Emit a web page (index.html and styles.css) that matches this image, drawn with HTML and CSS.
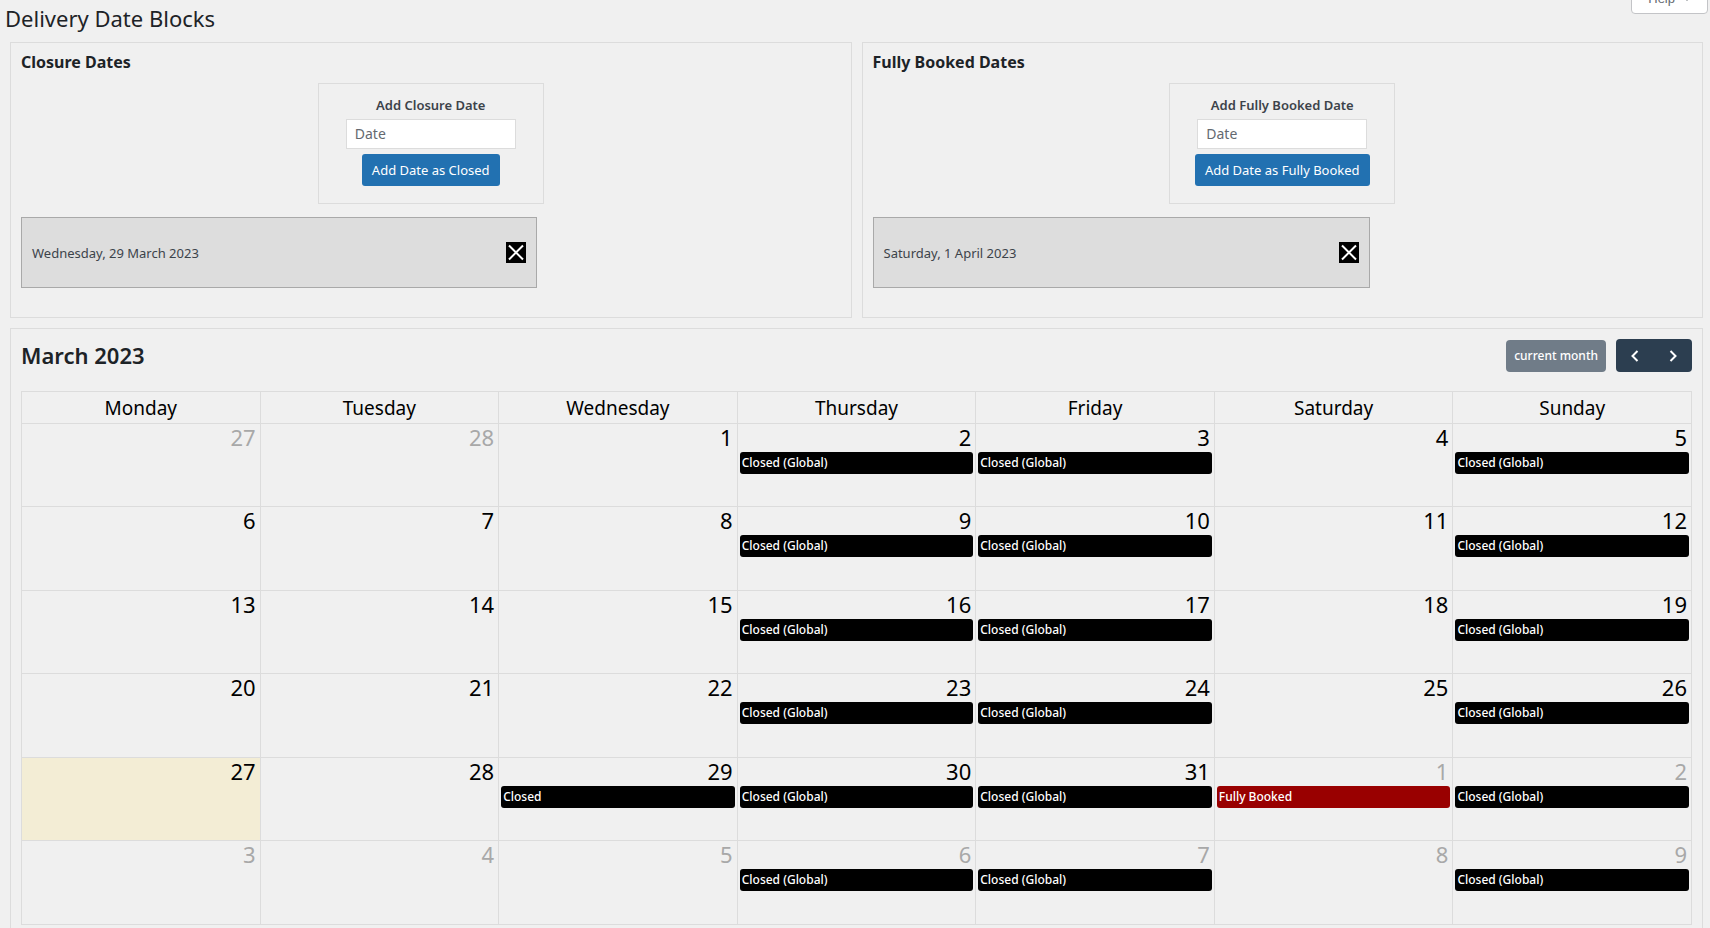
FILE: index.html
```
<!DOCTYPE html>
<html lang="en">
<head>
<meta charset="utf-8">
<title>Delivery Date Blocks</title>
<link rel="stylesheet" href="styles.css">
</head>
<body>
<header class="page-header">
  <h1 class="page-title">Delivery Date Blocks</h1>
  <button class="help-tab" type="button">Help <span class="help-arrow"></span></button>
</header>
<main class="content">
  <div class="panels">
    <section class="panel">
      <h2 class="panel-title">Closure Dates</h2>
      <form class="date-form">
        <label class="date-label" for="closure-date">Add Closure Date</label>
        <input class="date-input" id="closure-date" type="text" placeholder="Date">
        <button class="primary-button" type="button">Add Date as Closed</button>
      </form>
      <ul class="date-list date-list-closed">
        <li class="date-item">
          <span>Wednesday, 29 March 2023</span>
          <button class="remove-button" type="button" aria-label="Remove Wednesday, 29 March 2023"><svg class="remove-icon" viewBox="0 0 20 21"><path d="M3 3.5l14 14M17 3.5l-14 14"/></svg></button>
        </li>
      </ul>
    </section>
    <section class="panel">
      <h2 class="panel-title">Fully Booked Dates</h2>
      <form class="date-form">
        <label class="date-label" for="booked-date">Add Fully Booked Date</label>
        <input class="date-input" id="booked-date" type="text" placeholder="Date">
        <button class="primary-button" type="button">Add Date as Fully Booked</button>
      </form>
      <ul class="date-list date-list-booked">
        <li class="date-item">
          <span>Saturday, 1 April 2023</span>
          <button class="remove-button" type="button" aria-label="Remove Saturday, 1 April 2023"><svg class="remove-icon" viewBox="0 0 20 21"><path d="M3 3.5l14 14M17 3.5l-14 14"/></svg></button>
        </li>
      </ul>
    </section>
  </div>
  <section class="panel calendar-panel">
    <div class="toolbar">
      <h2 class="month-title">March 2023</h2>
      <div class="toolbar-actions">
        <button class="month-button" type="button">current month</button>
        <div class="nav-group">
          <button class="nav-button" type="button" aria-label="Previous month"><svg class="nav-icon" viewBox="0 0 8 12"><path d="M6.5 1L1.5 6l5 5"/></svg></button>
          <button class="nav-button" type="button" aria-label="Next month"><svg class="nav-icon" viewBox="0 0 8 12"><path d="M1.5 1l5 5-5 5"/></svg></button>
        </div>
      </div>
    </div>
    <table class="calendar">
      <thead>
        <tr><th>Monday</th><th>Tuesday</th><th>Wednesday</th><th>Thursday</th><th>Friday</th><th>Saturday</th><th>Sunday</th></tr>
      </thead>
      <tbody>
        <tr>
          <td class="other"><div class="day">27</div></td>
          <td class="other"><div class="day">28</div></td>
          <td><div class="day">1</div></td>
          <td><div class="day">2</div><div class="event">Closed (Global)</div></td>
          <td><div class="day">3</div><div class="event">Closed (Global)</div></td>
          <td><div class="day">4</div></td>
          <td><div class="day">5</div><div class="event">Closed (Global)</div></td>
        </tr>
        <tr>
          <td><div class="day">6</div></td>
          <td><div class="day">7</div></td>
          <td><div class="day">8</div></td>
          <td><div class="day">9</div><div class="event">Closed (Global)</div></td>
          <td><div class="day">10</div><div class="event">Closed (Global)</div></td>
          <td><div class="day">11</div></td>
          <td><div class="day">12</div><div class="event">Closed (Global)</div></td>
        </tr>
        <tr>
          <td><div class="day">13</div></td>
          <td><div class="day">14</div></td>
          <td><div class="day">15</div></td>
          <td><div class="day">16</div><div class="event">Closed (Global)</div></td>
          <td><div class="day">17</div><div class="event">Closed (Global)</div></td>
          <td><div class="day">18</div></td>
          <td><div class="day">19</div><div class="event">Closed (Global)</div></td>
        </tr>
        <tr>
          <td><div class="day">20</div></td>
          <td><div class="day">21</div></td>
          <td><div class="day">22</div></td>
          <td><div class="day">23</div><div class="event">Closed (Global)</div></td>
          <td><div class="day">24</div><div class="event">Closed (Global)</div></td>
          <td><div class="day">25</div></td>
          <td><div class="day">26</div><div class="event">Closed (Global)</div></td>
        </tr>
        <tr>
          <td class="today"><div class="day">27</div></td>
          <td><div class="day">28</div></td>
          <td><div class="day">29</div><div class="event">Closed</div></td>
          <td><div class="day">30</div><div class="event">Closed (Global)</div></td>
          <td><div class="day">31</div><div class="event">Closed (Global)</div></td>
          <td class="other"><div class="day">1</div><div class="event event-booked">Fully Booked</div></td>
          <td class="other"><div class="day">2</div><div class="event">Closed (Global)</div></td>
        </tr>
        <tr>
          <td class="other"><div class="day">3</div></td>
          <td class="other"><div class="day">4</div></td>
          <td class="other"><div class="day">5</div></td>
          <td class="other"><div class="day">6</div><div class="event">Closed (Global)</div></td>
          <td class="other"><div class="day">7</div><div class="event">Closed (Global)</div></td>
          <td class="other"><div class="day">8</div></td>
          <td class="other"><div class="day">9</div><div class="event">Closed (Global)</div></td>
        </tr>
      </tbody>
    </table>
  </section>
</main>
</body>
</html>
```
FILE: styles.css
```
* { box-sizing: border-box; }
html { scrollbar-width: none; }
body {
  margin: 0;
  background: #f0f0f0;
  color: #3c434a;
  font: 13px/20px "Noto Sans", sans-serif;
}
button, input { font-family: inherit; margin: 0; }
h1, h2 { margin: 0; color: #1d2327; }

.page-header {
  display: flex;
  justify-content: space-between;
  align-items: flex-start;
  height: 42px;
  padding: 0 2px 0 5px;
}
.page-title { font-size: 22px; font-weight: 400; line-height: 36px; }
.help-tab {
  display: flex;
  align-items: center;
  gap: 8px;
  height: 32px;
  margin-top: -18px;
  padding: 0 16px;
  border: 1px solid #c3c4c7;
  border-radius: 0 0 4px 4px;
  background: #fff;
  color: #646970;
  font-family: "Liberation Sans", sans-serif;
  font-size: 13px;
}
.help-arrow {
  border: 4px solid transparent;
  border-top: 5px solid #646970;
  border-bottom: 0;
}

.content { padding: 0 7px 10px 10px; }
.panels {
  display: grid;
  grid-template-columns: 1fr 1fr;
  gap: 10px;
  margin-bottom: 10px;
}
.panel { border: 1px solid #dcdcdc; padding: 9px 10px 29px; }
.panel-title { font-size: 16px; font-weight: 700; line-height: 20px; }
.date-form {
  display: flex;
  flex-direction: column;
  align-items: center;
  width: 226px;
  margin: 11px auto 13px;
  padding: 11px 20px 17px;
  border: 1px solid #dcdcdc;
}
.date-label { font-weight: 600; line-height: 20px; margin-bottom: 4px; }
.date-input {
  width: 170px;
  height: 30px;
  margin-bottom: 5px;
  padding: 0 8px 2px;
  border: 1px solid #dcdcdc;
  background: #fff;
  color: #3c434a;
  font-size: 14px;
}
.date-input::placeholder { color: #646970; opacity: 1; }
.primary-button {
  height: 32px;
  padding: 0 10px;
  border: 0;
  border-radius: 3px;
  background: #2271b1;
  color: #fff;
  font-size: 13px;
  font-weight: 400;
  white-space: nowrap;
}
.date-list { margin: 0; padding: 0; list-style: none; }
.date-list-closed { width: 63%; }
.date-list-booked { width: 60.7%; }
.date-item {
  display: flex;
  align-items: center;
  justify-content: space-between;
  height: 71px;
  padding: 0 10px;
  border: 1px solid #a9a9a9;
  background: #ddd;
  font-size: 13px;
}
.remove-button { width: 20px; height: 21px; padding: 0; border: 0; background: #000; }
.remove-icon { display: block; width: 20px; height: 21px; fill: none; stroke: #fff; stroke-width: 2; }

.calendar-panel { padding-top: 10px; padding-bottom: 10px; }
.toolbar {
  display: flex;
  justify-content: space-between;
  align-items: flex-start;
  height: 33px;
  margin-bottom: 19px;
}
.month-title { font-size: 22px; font-weight: 600; line-height: 32px; }
.toolbar-actions { display: flex; align-items: flex-end; gap: 10px; }
.month-button {
  height: 32px;
  padding: 0 8px 2px;
  border: 0;
  border-radius: 4px;
  background: #707c88;
  color: #fff;
  font-size: 12px;
  font-weight: 500;
}
.nav-group { display: flex; overflow: hidden; border-radius: 4px; }
.nav-button {
  display: flex;
  align-items: center;
  justify-content: center;
  width: 38px;
  height: 33px;
  padding: 0;
  border: 0;
  background: #2c3e50;
}
.nav-icon { width: 8px; height: 12px; fill: none; stroke: #fff; stroke-width: 2; }

.calendar {
  width: 100%;
  border-collapse: collapse;
  table-layout: fixed;
  color: #000;
}
.calendar th {
  height: 32px;
  padding: 0;
  border: 1px solid #dcdcdc;
  font-size: 19px;
  font-weight: 400;
  line-height: 24px;
}
.calendar td {
  height: 83px;
  padding: 0 2px;
  border: 1px solid #dcdcdc;
  vertical-align: top;
}
.calendar tr:nth-child(even) td { height: 84px; }
.day {
  margin-bottom: 2px;
  padding: 0 2px;
  font-size: 22px;
  line-height: 26px;
  text-align: right;
}
.other .day { color: #a8a8a8; }
.today { background: #f3edd5; }
.event {
  height: 22px;
  padding: 0 2px;
  border-radius: 3px;
  background: #000;
  color: #fff;
  font-size: 12px;
  font-weight: 500;
  line-height: 22px;
}
.event-booked { background: #900; }
```
